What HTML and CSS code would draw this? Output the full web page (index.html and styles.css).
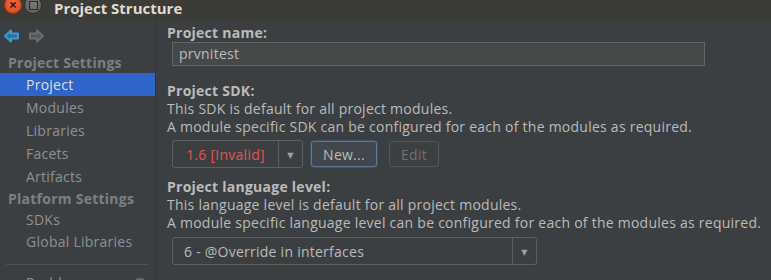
FILE: index.html
```html
<!DOCTYPE html>
<html lang="en">
<head>
    <meta charset="UTF-8">
    <title>Project Structure</title>
    <link rel="stylesheet" href="styles.css">
</head>
<body>

    <div class="titlebar">
        <span class="winbtn close">&times;</span>
        <span class="winbtn max"><span class="sq"></span></span>
        <span class="title">Project Structure</span>
    </div>

    <div class="window">
        <div class="sidebar">
            <div class="nav">
                <svg width="18" height="14" viewBox="0 0 18 14">
                    <path d="M1 7 L7 1.5 L7 4.5 L14 4.5 L14 9.5 L7 9.5 L7 12.5 Z" fill="#2e6f9c" stroke="#3d9ad6" stroke-width="2" stroke-linejoin="round"/>
                </svg>
                <svg width="18" height="14" viewBox="0 0 18 14">
                    <path d="M15 7 L9 1.5 L9 4.5 L2 4.5 L2 9.5 L9 9.5 L9 12.5 Z" fill="#55585a" stroke="#6b6d6f" stroke-width="2" stroke-linejoin="round"/>
                </svg>
            </div>
            <div class="group">Project Settings</div>
            <div class="item selected">Project</div>
            <div class="item">Modules</div>
            <div class="item">Libraries</div>
            <div class="item">Facets</div>
            <div class="item">Artifacts</div>
            <div class="group">Platform Settings</div>
            <div class="item short">SDKs</div>
            <div class="item short">Global Libraries</div>
            <div class="sep"></div>
            <div class="item problems">Problems <span class="dot"></span></div>
        </div>

        <div class="content">
            <div class="label">Project name:</div>
            <div class="input">prvnitest</div>

            <div class="label sdk">Project SDK:</div>
            <div class="text">This SDK is default for all project modules.</div>
            <div class="text">A module specific SDK can be configured for each of the modules as required.</div>
            <div class="row">
                <div class="combo sdk-combo">
                    <span class="value invalid">1.6 [Invalid]</span>
                    <span class="arrow">&#9660;</span>
                </div>
                <button class="btn default">New...</button>
                <button class="btn disabled">Edit</button>
            </div>

            <div class="label level">Project language level:</div>
            <div class="text">This language level is default for all project modules.</div>
            <div class="text">A module specific language level can be configured for each of the modules as required.</div>
            <div class="combo level-combo">
                <span class="value">6 - @Override in interfaces</span>
                <span class="arrow">&#9660;</span>
            </div>
        </div>
    </div>

</body>
</html>
```

FILE: styles.css
```css
body {
    margin: 0;
    width: 771px;
    height: 280px;
    overflow: hidden;
    background-color: #3c3f41;
    font-family: "Open Sans", "DejaVu Sans", sans-serif;
    font-size: 14px;
    letter-spacing: 0.25px;
    color: #bbbbbb;
}
.titlebar {
    height: 19px;
    background-color: #3c3b37;
    display: flex;
    align-items: flex-start;
    overflow: hidden;
}
.winbtn {
    width: 18px;
    height: 18px;
    border-radius: 50%;
    margin-top: -4px;
    display: flex;
    align-items: center;
    justify-content: center;
    box-sizing: border-box;
}
.close {
    margin-left: 4px;
    background: radial-gradient(circle at 50% 40%, #f46b3e, #d8451a);
    border: 1px solid #9c3414;
    color: #3b1a0c;
    font-size: 14px;
    font-weight: bold;
    line-height: 1;
    letter-spacing: 0;
}
.max {
    margin-left: 2px;
    background: radial-gradient(circle at 50% 40%, #7b7a74, #5c5b56);
    border: 1px solid #2f2e2b;
}
.sq {
    width: 7px;
    height: 7px;
    border: 1px solid #2b2a27;
}
.title {
    margin-left: 12px;
    margin-top: -2px;
    font-weight: bold;
    font-size: 15px;
    letter-spacing: 0;
    color: #dfdbd2;
}
.window {
    display: flex;
    height: 261px;
}
.sidebar {
    width: 155px;
    border-right: 1px solid #333537;
    background-color: #3c3f41;
    flex-shrink: 0;
}
.nav {
    height: 33px;
    display: flex;
    align-items: center;
    gap: 6px;
    padding-left: 4px;
}
.group {
    height: 21px;
    line-height: 21px;
    padding-left: 8px;
    font-weight: bold;
    color: #7d8083;
}
.item {
    height: 23px;
    line-height: 23px;
    padding-left: 26px;
    color: #8e9194;
}
.item.short {
    height: 22px;
    line-height: 22px;
}
.item.selected {
    background-color: #2f65ca;
    color: #dddddd;
}
.sep {
    height: 1px;
    margin: 11px 6px 0 6px;
    background-color: #505356;
}
.problems {
    margin-top: 6px;
    position: relative;
}
.dot {
    position: absolute;
    left: 132px;
    top: 7px;
    width: 16px;
    height: 16px;
    border-radius: 50%;
    background-color: #6a6d70;
}
.content {
    flex: 1;
    padding-left: 11px;
    padding-top: 5px;
}
.label {
    font-weight: bold;
    line-height: 18px;
}
.label.sdk {
    margin-top: 16px;
}
.label.level {
    margin-top: 10px;
}
.text {
    line-height: 18px;
}
.input {
    width: 533px;
    height: 24px;
    margin-left: 5px;
    box-sizing: border-box;
    border: 1px solid #646464;
    background-color: #45494a;
    padding-left: 6px;
    line-height: 22px;
}
.row {
    display: flex;
    align-items: center;
    margin-top: 4px;
    margin-left: 5px;
    gap: 8px;
}
.combo {
    height: 28px;
    box-sizing: border-box;
    border: 1px solid #5e6060;
    border-radius: 3px;
    background-color: #3c3f41;
    display: flex;
    align-items: center;
}
.combo .value {
    flex: 1;
    padding-left: 11px;
    color: #bbbbbb;
}
.combo .value.invalid {
    color: #e35353;
    text-align: center;
    padding-left: 0;
}
.combo .arrow {
    width: 23px;
    height: 100%;
    border-left: 1px solid #5e6060;
    display: flex;
    align-items: center;
    justify-content: center;
    font-size: 8px;
    color: #a0a0a0;
}
.sdk-combo {
    width: 131px;
}
.level-combo {
    width: 365px;
    margin-left: 5px;
    margin-top: 5px;
}
.btn {
    font-family: inherit;
    font-size: 14px;
    letter-spacing: 0.25px;
    height: 26px;
    border-radius: 3px;
    background-color: #3c3f41;
    padding: 0;
}
.btn.default {
    width: 66px;
    border: 1px solid #5a7b9c;
    background-color: #41474c;
    color: #bbbbbb;
    box-shadow: 0 0 0 1px #3d5266;
}
.btn.disabled {
    width: 50px;
    margin-left: 4px;
    border: 1px solid #55585a;
    color: #6e7173;
}
```
